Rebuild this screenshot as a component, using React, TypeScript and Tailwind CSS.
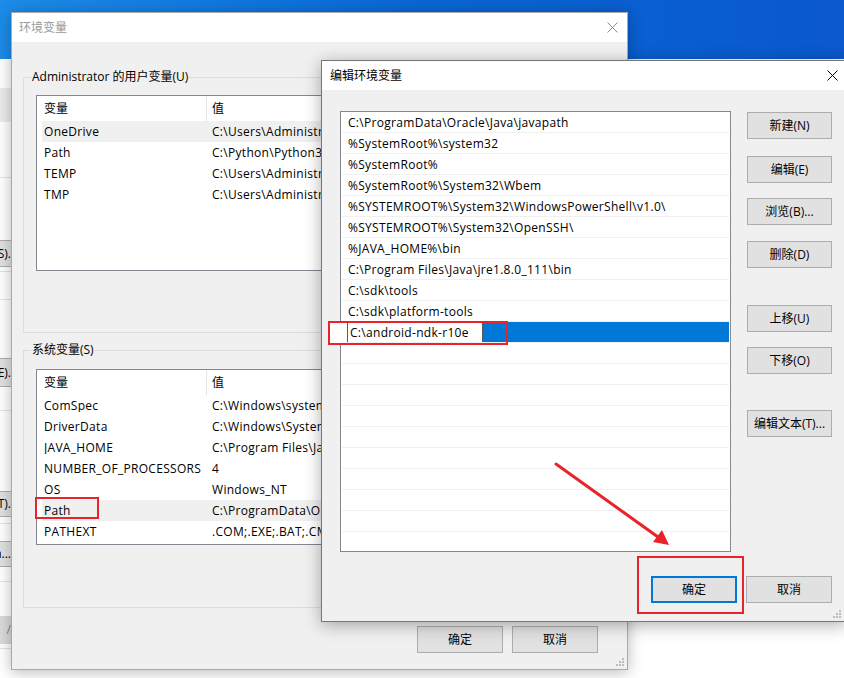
import React from 'react';

const userVars: [string, string][] = [
  ['OneDrive', 'C:\\Users\\Administrator\\OneDrive'],
  ['Path', 'C:\\Python\\Python38\\Scripts\\;C:\\Python\\Python38\\'],
  ['TEMP', 'C:\\Users\\Administrator\\AppData\\Local\\Temp'],
  ['TMP', 'C:\\Users\\Administrator\\AppData\\Local\\Temp'],
];

const systemVars: [string, string][] = [
  ['ComSpec', 'C:\\Windows\\system32\\cmd.exe'],
  ['DriverData', 'C:\\Windows\\System32\\Drivers\\DriverData'],
  ['JAVA_HOME', 'C:\\Program Files\\Java\\jdk1.8.0_111'],
  ['NUMBER_OF_PROCESSORS', '4'],
  ['OS', 'Windows_NT'],
  ['Path', 'C:\\ProgramData\\Oracle\\Java\\javapath;%SystemRoot%'],
  ['PATHEXT', '.COM;.EXE;.BAT;.CMD;.VBS;.VBE;.JS;.JSE;.WSF;.WSH;.MSC'],
];

const pathEntries = [
  'C:\\ProgramData\\Oracle\\Java\\javapath',
  '%SystemRoot%\\system32',
  '%SystemRoot%',
  '%SystemRoot%\\System32\\Wbem',
  '%SYSTEMROOT%\\System32\\WindowsPowerShell\\v1.0\\',
  '%SYSTEMROOT%\\System32\\OpenSSH\\',
  '%JAVA_HOME%\\bin',
  'C:\\Program Files\\Java\\jre1.8.0_111\\bin',
  'C:\\sdk\\tools',
  'C:\\sdk\\platform-tools',
];

function CloseIcon({ className }: { className?: string }) {
  return (
    <svg width="11" height="11" viewBox="0 0 11 11" className={className}>
      <path d="M0.5 0.5L10.5 10.5M10.5 0.5L0.5 10.5" stroke="currentColor" strokeWidth="1" />
    </svg>
  );
}

function Grip() {
  return (
    <svg width="8" height="8" viewBox="0 0 8 8" className="absolute right-[3px] bottom-[3px]">
      <rect x="6" y="0" width="2" height="2" fill="#bcbcbc" />
      <rect x="3" y="3" width="2" height="2" fill="#bcbcbc" />
      <rect x="6" y="3" width="2" height="2" fill="#bcbcbc" />
      <rect x="0" y="6" width="2" height="2" fill="#bcbcbc" />
      <rect x="3" y="6" width="2" height="2" fill="#bcbcbc" />
      <rect x="6" y="6" width="2" height="2" fill="#bcbcbc" />
    </svg>
  );
}

function Btn({
  children,
  className = '',
  primary = false,
}: {
  children: React.ReactNode;
  className?: string;
  primary?: boolean;
}) {
  return (
    <button
      type="button"
      className={`h-[27px] flex items-center justify-center bg-[#e1e1e1] text-black ${
        primary ? 'border-2 border-[#0078d7]' : 'border border-[#adadad]'
      } ${className}`}
    >
      {children}
    </button>
  );
}

function StripBtn({ label, h }: { label: string; h: string }) {
  return (
    <div className={`${h} bg-[#e1e1e1] border-y border-[#adadad] flex items-center justify-end whitespace-nowrap`}>
      {label}
    </div>
  );
}

// window peeking out behind the dialogs on the left
function BackStrip() {
  return (
    <div className="w-[11px] flex flex-col bg-white overflow-hidden">
      <div className="h-[29px] shrink-0" />
      <div className="h-[34px] shrink-0 bg-[#ebebeb]" />
      <div className="h-[56px] shrink-0 border-b border-[#e3e3e3]" />
      <div className="h-[62px] shrink-0" />
      <StripBtn label="S)." h="h-[27px] shrink-0" />
      <div className="h-[5px] shrink-0 border-b border-[#e3e3e3]" />
      <div className="h-[28px] shrink-0 border-b border-[#e3e3e3]" />
      <div className="h-[58px] shrink-0" />
      <StripBtn label="E)." h="h-[29px] shrink-0" />
      <div className="h-[24px] shrink-0 border-b border-[#e3e3e3]" />
      <div className="h-[80px] shrink-0" />
      <StripBtn label="T)." h="h-[26px] shrink-0" />
      <div className="h-[7px] shrink-0 border-b border-[#e3e3e3]" />
      <div className="h-[17px] shrink-0" />
      <StripBtn label="a..." h="h-[26px] shrink-0" />
      <div className="h-[15px] shrink-0 border-b border-[#e3e3e3]" />
      <div className="h-[34px] shrink-0" />
      <div className="h-[28px] shrink-0 bg-[#dadada] flex items-center justify-end text-[#888]">/</div>
      <div className="h-[5px] shrink-0 border-b border-[#e3e3e3]" />
    </div>
  );
}

function VarList({ rows, selected }: { rows: [string, string][]; selected: number }) {
  return (
    <div className="h-[176px] bg-white border border-[#828790] overflow-hidden">
      <div className="h-[25px] flex">
        <div className="w-[170px] pl-[7px] flex items-center border-r border-[#e5e5e5]">变量</div>
        <div className="pl-[5px] flex items-center">值</div>
      </div>
      {rows.map(([name, value], i) => (
        <div
          key={name + i}
          className={`ml-[5px] h-[21px] flex items-center whitespace-nowrap tracking-[0.3px] ${
            i === selected ? 'bg-[#f0f0f0]' : ''
          }`}
        >
          <div className="w-[170px] pl-[2px] overflow-hidden">{name}</div>
          <div>{value}</div>
        </div>
      ))}
    </div>
  );
}

function EnvWindow() {
  return (
    <div className="absolute left-[11px] top-[12px] w-[617px] h-[658px] bg-[#f0f0f0] border border-[#a9a9a9] shadow-[0_2px_14px_rgba(0,0,0,0.28)] flex flex-col">
      <div className="h-[29px] shrink-0 bg-white flex items-center justify-between pl-[7px] pr-[9px] text-[#999999]">
        <span>环境变量</span>
        <CloseIcon className="text-[#8a8a8a]" />
      </div>
      <div className="flex-1 flex flex-col px-[11px]">
        <fieldset className="mt-[27px] border border-[#dcdcdc] pb-[61px]">
          <legend className="ml-[7px] px-[1px] leading-[16px]">Administrator 的用户变量(U)</legend>
          <div className="mt-[10px] px-[12px]">
            <VarList rows={userVars} selected={0} />
          </div>
        </fieldset>
        <fieldset className="mt-[9px] border border-[#dcdcdc] pb-[62px]">
          <legend className="ml-[7px] px-[1px] leading-[16px]">系统变量(S)</legend>
          <div className="mt-[11px] px-[12px]">
            <VarList rows={systemVars} selected={5} />
          </div>
        </fieldset>
        <div className="mt-[18px] flex justify-end gap-[9px] pr-[18px]">
          <Btn className="w-[86px]">确定</Btn>
          <Btn className="w-[86px]">取消</Btn>
        </div>
      </div>
      <Grip />
    </div>
  );
}

function EditWindow() {
  return (
    <div className="absolute left-[321px] top-[60px] w-[526px] h-[562px] bg-[#f0f0f0] border border-[#767676] shadow-[0_3px_16px_rgba(0,0,0,0.32)] flex flex-col">
      <div className="h-[29px] shrink-0 bg-white flex items-center justify-between pl-[8px] pr-[8px] text-black">
        <span>编辑环境变量</span>
        <CloseIcon className="text-black" />
      </div>
      <div className="flex-1 flex flex-col pt-[21px] pl-[18px]">
        <div className="flex">
          <div className="w-[391px] h-[441px] bg-white border border-[#828790] overflow-hidden tracking-[0.3px]">
            {pathEntries.map((p) => (
              <div key={p} className="mx-[1px] h-[21px] border-b border-[#f0f0f0] flex items-center pl-[6px] pt-[1px] whitespace-nowrap">
                {p}
              </div>
            ))}
            <div className="mx-[1px] h-[21px] border-b border-[#f0f0f0] flex bg-[#0078d7]">
              <div className="w-[5px] bg-white" />
              <div className="w-[136px] bg-white border-x border-[#5a5a5a] flex items-center pl-[2px] pt-[1px] whitespace-nowrap">
                C:\android-ndk-r10e
              </div>
            </div>
            {Array.from({ length: 10 }).map((_, i) => (
              <div key={i} className="mx-[1px] h-[21px] border-b border-[#f0f0f0]" />
            ))}
          </div>
          <div className="ml-[16px] w-[85px] flex flex-col pt-[1px]">
            <Btn>新建(N)</Btn>
            <Btn className="mt-[17px]">编辑(E)</Btn>
            <Btn className="mt-[15px]">浏览(B)...</Btn>
            <Btn className="mt-[16px]">删除(D)</Btn>
            <Btn className="mt-[37px]">上移(U)</Btn>
            <Btn className="mt-[15px]">下移(O)</Btn>
            <Btn className="mt-[36px]">编辑文本(T)...</Btn>
          </div>
        </div>
        <div className="mt-[24px] flex justify-end gap-[9px] pr-[14px]">
          <Btn primary className="w-[86px]">确定</Btn>
          <Btn className="w-[86px]">取消</Btn>
        </div>
      </div>
      <div className="absolute right-[2px] bottom-0 w-[12px] h-[12px]">
        <Grip />
      </div>
    </div>
  );
}

function Annotations() {
  return (
    <>
      <div className="absolute left-[35px] top-[497px] w-[64px] h-[22px] border-2 border-[#e8232b]" />
      <div className="absolute left-[328px] top-[321px] w-[180px] h-[24px] border-2 border-[#e8232b] flex">
        <div className="w-[11px] h-full bg-white" />
      </div>
      <div className="absolute left-[637px] top-[556px] w-[107px] h-[58px] border-2 border-[#e8232b]" />
      <svg className="absolute left-0 top-0 pointer-events-none" width="844" height="678" viewBox="0 0 844 678">
        <line x1="556" y1="464" x2="658" y2="537" stroke="#e8232b" strokeWidth="3" strokeLinecap="round" />
        <polygon points="669,545 653,542 662,530" fill="#e8232b" />
      </svg>
    </>
  );
}

export default function App() {
  return (
    <div className="relative w-[844px] h-[678px] overflow-hidden bg-white text-[12px] leading-none text-black font-['Open_Sans','Noto_Sans_CJK_SC',sans-serif]">
      <div className="h-[59px] bg-linear-to-r from-[#1c8ce8] via-[#0a66d6] to-[#0a58cc]" />
      <div className="flex">
        <BackStrip />
      </div>
      <EnvWindow />
      <EditWindow />
      <Annotations />
    </div>
  );
}
